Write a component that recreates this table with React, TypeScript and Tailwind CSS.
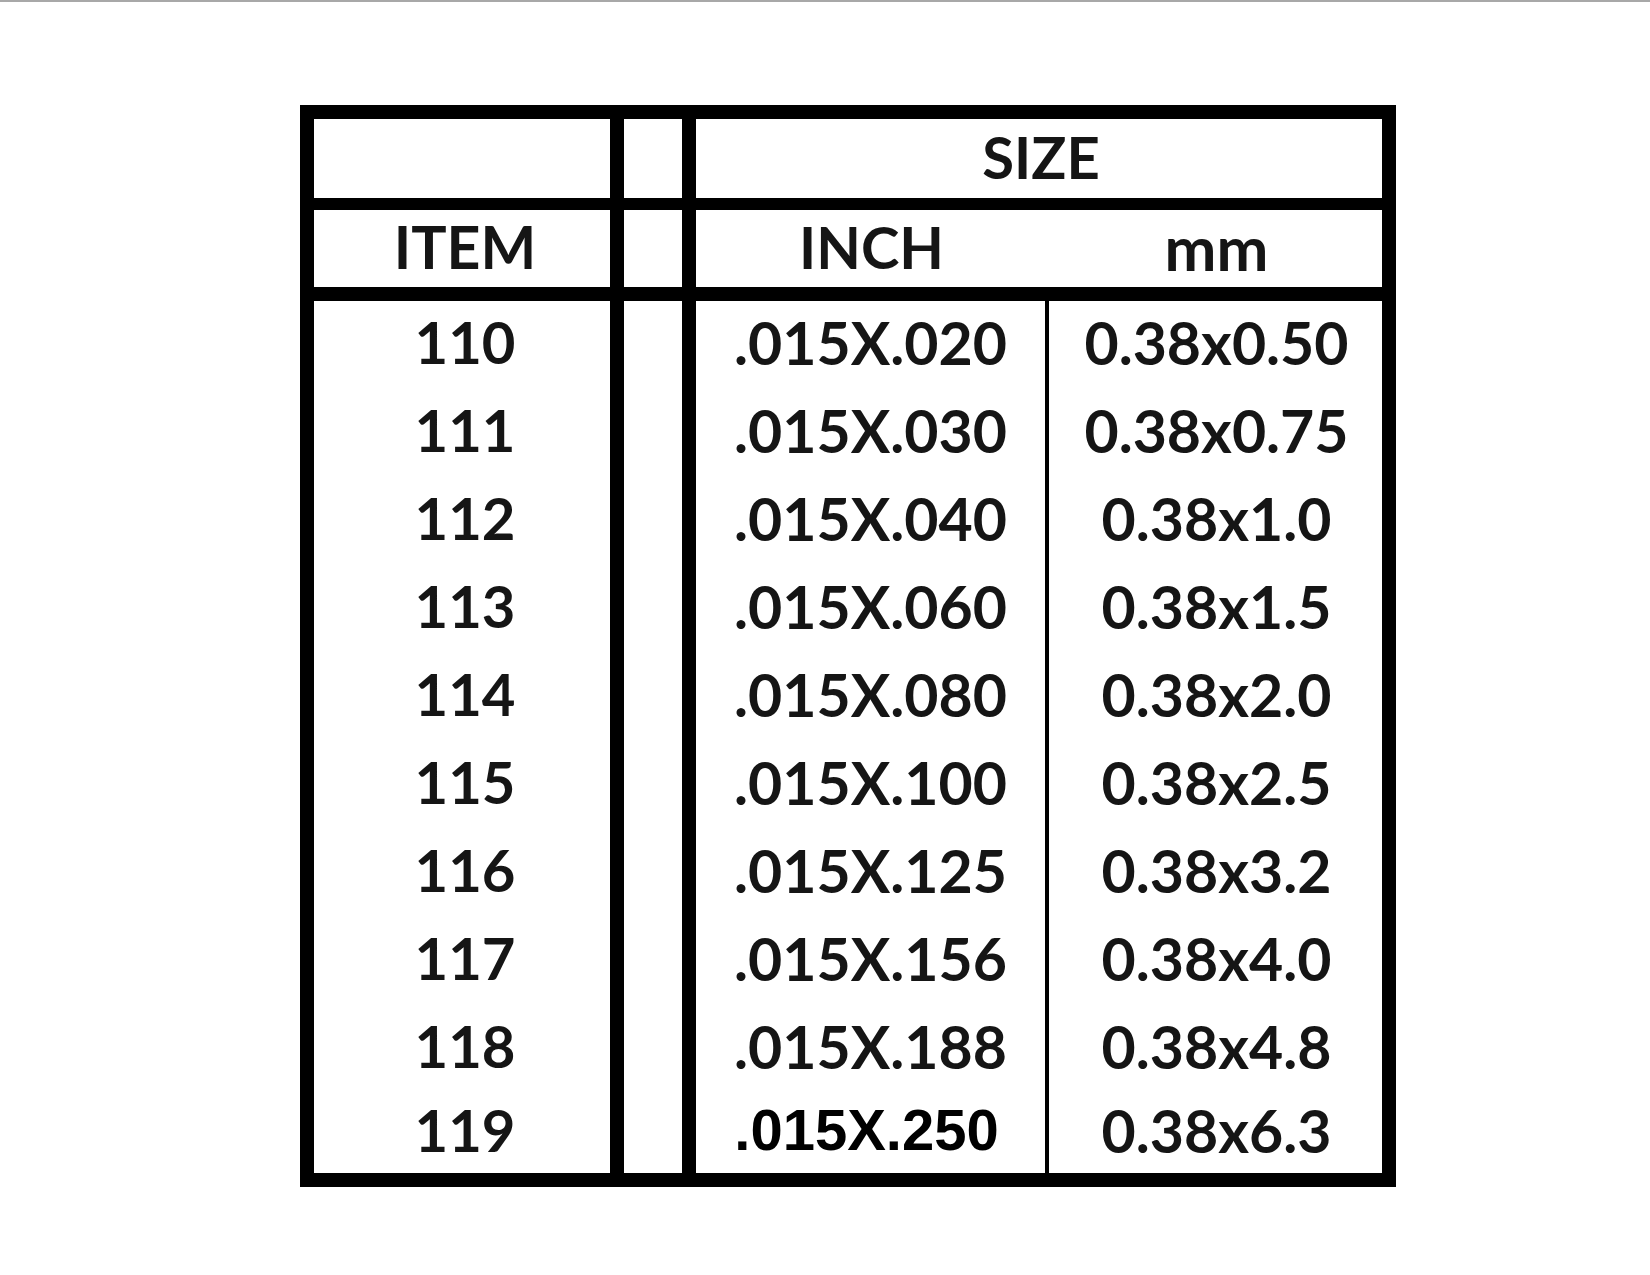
const rows = [
  { item: '110', inch: '.015X.020', mm: '0.38x0.50' },
  { item: '111', inch: '.015X.030', mm: '0.38x0.75' },
  { item: '112', inch: '.015X.040', mm: '0.38x1.0' },
  { item: '113', inch: '.015X.060', mm: '0.38x1.5' },
  { item: '114', inch: '.015X.080', mm: '0.38x2.0' },
  { item: '115', inch: '.015X.100', mm: '0.38x2.5' },
  { item: '116', inch: '.015X.125', mm: '0.38x3.2' },
  { item: '117', inch: '.015X.156', mm: '0.38x4.0' },
  { item: '118', inch: '.015X.188', mm: '0.38x4.8' },
  { item: '119', inch: '.015X.250', mm: '0.38x6.3', plain: true },
];

export default function App() {
  return (
    <div className="w-[1650px] h-[1275px] bg-white font-['Lato',_sans-serif] font-bold text-[#151515]">
      <div className="h-[2px] bg-[#a8a8a8]" />

      <div className="pt-[103px] pl-[300px]">
        {/* table */}
        <div className="w-[1096px] bg-black p-[14px] grid grid-cols-[296px_58px_686px] grid-rows-[79px_77px_874px] gap-x-[14px] gap-y-[12px]">
          {/* header row 1 */}
          <div className="bg-white" />
          <div className="bg-white" />
          <div className="bg-white flex items-center justify-center text-[58px] leading-none pb-[4px] pl-[4px]">SIZE</div>

          {/* header row 2 */}
          <div className="bg-white flex items-center justify-center text-[59px] leading-none pb-[4px] pl-[6px]">ITEM</div>
          <div className="bg-white" />
          <div className="bg-white flex items-center pb-[4px]">
            <div className="w-[349px] text-center text-[58px] leading-none pl-[2px]">INCH</div>
            <div className="flex-1 text-center text-[62px] leading-none pl-[6px]">mm</div>
          </div>

          {/* data */}
          <div className="bg-white flex flex-col mt-[2px]">
            {rows.map(r => (
              <div
                key={r.item}
                className={`flex items-center justify-center text-[58px] leading-none pl-[6px] pb-[6px] ${r.plain ? 'flex-1' : 'h-[88px]'}`}
              >
                {r.item}
              </div>
            ))}
          </div>
          <div className="bg-white mt-[2px]" />
          <div className="bg-white flex mt-[2px]">
            <div className="w-[349px] flex flex-col">
              {rows.map(r => (
                <div
                  key={r.item}
                  className={`flex items-center justify-center leading-none pb-[6px] ${r.plain ? "flex-1 font-['Liberation_Sans',_sans-serif] text-[58px] text-black pr-[8px]" : 'h-[88px] text-[59px]'}`}
                >
                  {r.inch}
                </div>
              ))}
            </div>
            <div className="w-[4px] bg-black" />
            <div className="flex-1 flex flex-col">
              {rows.map(r => (
                <div
                  key={r.item}
                  className={`flex items-center justify-center text-[59px] leading-none pl-[2px] pb-[6px] ${r.plain ? 'flex-1' : 'h-[88px]'}`}
                >
                  {r.mm}
                </div>
              ))}
            </div>
          </div>
        </div>
      </div>
    </div>
  );
}
